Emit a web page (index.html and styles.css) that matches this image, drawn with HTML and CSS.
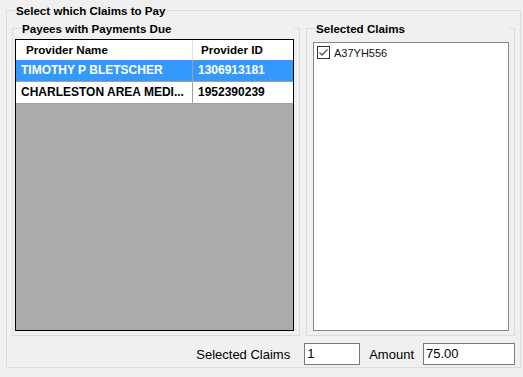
FILE: index.html
```html
<!DOCTYPE html>
<html lang="en">

<head>
    <meta charset="UTF-8">
    <title>Select which Claims to Pay</title>
    <link rel="stylesheet" href="styles.css">
</head>

<body>
    <div class="group outer">
        <div class="group-title">Select which Claims to Pay</div>
        <div class="panels">
            <div class="group payees">
                <div class="group-title">Payees with Payments Due</div>
                <div class="grid">
                    <div class="grid-row header">
                        <div class="cell name">Provider Name</div>
                        <div class="cell id">Provider ID</div>
                    </div>
                    <div class="grid-row selected">
                        <div class="cell name">TIMOTHY P BLETSCHER</div>
                        <div class="cell id">1306913181</div>
                    </div>
                    <div class="grid-row">
                        <div class="cell name" title="CHARLESTON AREA MEDICAL CENTER">CHARLESTON AREA MEDI...</div>
                        <div class="cell id">1952390239</div>
                    </div>
                </div>
            </div>
            <div class="group claims">
                <div class="group-title">Selected Claims</div>
                <div class="listbox">
                    <label class="check-item">
                        <span class="checkbox">
                            <svg width="11" height="11" viewBox="0 0 11 11">
                                <polyline points="1.5,5.5 4,8 9.5,2.5" fill="none" stroke="#555" stroke-width="1.3"/>
                            </svg>
                        </span>
                        <span>A37YH556</span>
                    </label>
                </div>
            </div>
        </div>
        <div class="totals">
            <span class="field-label">Selected Claims</span>
            <div class="textbox count">1</div>
            <span class="field-label amount-label">Amount</span>
            <div class="textbox amount">75.00</div>
        </div>
    </div>
</body>

</html>
```

FILE: styles.css
```css
:root {
    --bg-color: #f0f0f0;
    --group-border: #dcdcdc;
    --highlight: #3399ff;
    --workspace: #ababab;
    --input-border: #7a7a7a;
}

body {
    margin: 0;
    padding: 10px 0 0 6px;
    background-color: var(--bg-color);
    font-family: 'Liberation Sans', Arial, sans-serif;
    font-size: 11px;
    color: #000;
}

.group {
    border: 1px solid var(--group-border);
    box-sizing: border-box;
}

.group-title {
    display: table;
    margin: -7px 0 0 3px;
    padding: 0 1px;
    line-height: 13px;
    font-size: 11.6px;
    font-weight: bold;
    background-color: var(--bg-color);
}

.outer {
    width: 515px;
    height: 358px;
    padding: 0 5px;
}

.panels {
    display: flex;
    gap: 6px;
    margin-top: 11px;
}

.payees {
    width: 288px;
    height: 308px;
    padding: 0 5px 4px 2px;
    display: flex;
    flex-direction: column;
}

.payees .group-title {
    margin-left: 6px;
}

.grid {
    flex: 1;
    border: 1px solid #000;
    background-color: var(--workspace);
    margin-top: 4px;
}

.grid-row {
    display: flex;
    height: 22px;
    line-height: 21px;
    background-color: #fff;
    border-bottom: 1px solid #a0a0a0;
    box-sizing: border-box;
    font-size: 12px;
    font-weight: bold;
}

.grid-row.header {
    height: 20px;
    line-height: 20px;
    font-size: 11.6px;
    border-bottom: none;
}

.grid-row.selected {
    background-color: var(--highlight);
    color: #fff;
}

.cell {
    white-space: nowrap;
    box-sizing: border-box;
    padding-left: 5px;
}

.cell.name {
    width: 177px;
    border-right: 1px solid #a0a0a0;
}

.cell.id {
    flex: 1;
}

.header .cell.name {
    padding-left: 10px;
    border-right-color: #e3e3e3;
}

.header .cell.id {
    padding-left: 8px;
}

.claims {
    width: 209px;
    height: 308px;
    padding: 0 5px 4px 6px;
    display: flex;
    flex-direction: column;
}

.claims .group-title {
    margin-left: 2px;
}

.listbox {
    flex: 1;
    margin-top: 7px;
    border: 1px solid #828790;
    background-color: #fff;
    padding: 3px 3px;
}

.check-item {
    display: flex;
    align-items: center;
    gap: 4px;
    height: 13px;
    color: #111;
}

.checkbox {
    width: 13px;
    height: 13px;
    box-sizing: border-box;
    border: 1px solid #333;
    background-color: #fff;
    display: flex;
}

.totals {
    display: flex;
    align-items: center;
    justify-content: flex-end;
    margin-top: 7px;
    font-size: 13px;
}

.field-label {
    margin-right: 14px;
}

.amount-label {
    margin-left: 9px;
    margin-right: 9px;
}

.textbox {
    height: 22px;
    line-height: 20px;
    border: 1px solid var(--input-border);
    background-color: #fff;
    box-sizing: border-box;
    padding-left: 2px;
}

.textbox.count {
    width: 56px;
}

.textbox.amount {
    width: 92px;
}
```
